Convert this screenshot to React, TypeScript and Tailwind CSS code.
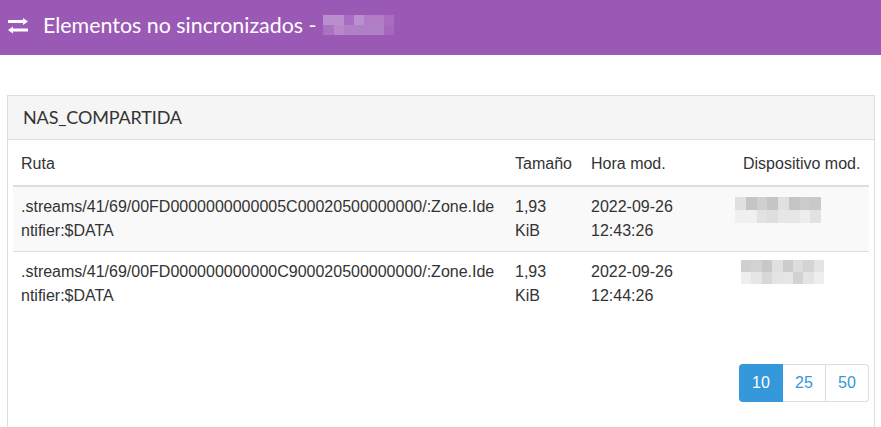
const headingFont = "font-['Lato','Open_Sans',sans-serif]";

const rows = [
  {
    path: ".streams/41/69/00FD0000000000005C00020500000000/:Zone.Identifier:$DATA",
    time: "12:43:26",
    rowClass: "h-[65px] border-b border-[#ddd] bg-[#f9f9f9]",
    mosaicClass: "w-[86px] pt-[10px]",
    cellClass: "h-[13px]",
    cells: [
      ["#e0e0e0", "#c5c5c5", "#d0d0d0", "#c5c5c5", "#e0e0e0", "#c5c5c5", "#cbcbcb", "#c9c9c9"],
      ["#f0f0f0", "#f0f0f0", "#e2e2e2", "#dedede", "#e6e6e6", "#e6e6e6", "#ededed", "#e2e2e2"],
    ],
  },
  {
    path: ".streams/41/69/00FD000000000000C900020500000000/:Zone.Identifier:$DATA",
    time: "12:44:26",
    rowClass: "h-[65px]",
    mosaicClass: "ml-[6px] w-[83px] pt-[8px]",
    cellClass: "h-[12px]",
    cells: [
      ["#d0d0d0", "#d3d3d3", "#c8c8c8", "#e0e0e0", "#cccccc", "#dddddd", "#d4d4d4", "#e4e4e4"],
      ["#eeeeee", "#e6e6e6", "#d8d8d8", "#e4e4e4", "#e6e6e6", "#d2d2d2", "#e4e4e4", "#eeeeee"],
    ],
  },
];

const titleCells = [
  ["#b98fcd", "#b98fcd", "#a96cc1", "#b98fcd", "#b07cc6", "#b07cc6", "#a96cc1"],
  ["#ab72c3", "#b888cb", "#b080c6", "#b080c6", "#b080c6", "#b080c6", "#a767bf"],
];

// pixelated block standing in for a censored name
function Mosaic({ cells, className, cellClass }: { cells: string[][]; className?: string; cellClass: string }) {
  return (
    <div className={className}>
      {cells.map((line, i) => (
        <div key={i} className="flex">
          {line.map((color, j) => (
            <div key={j} className={`flex-1 ${cellClass}`} style={{ backgroundColor: color }} />
          ))}
        </div>
      ))}
    </div>
  );
}

function App() {
  return (
    <div className="h-[427px] w-[881px] overflow-hidden bg-white font-['Liberation_Sans',sans-serif] text-[16px] leading-[24px] text-[#333]">
      <header className={`flex h-[55px] items-center bg-[#9b59b6] pb-[5px] pl-[8px] text-white ${headingFont}`}>
        <svg viewBox="0 0 20 16" className="mt-[1px] h-[16px] w-[20px] fill-white">
          <path d="M0 2h15V0l5 3.5-5 3.5V5H0z" />
          <path d="M20 10.5H5V8.5L0 12l5 3.5V13.5h15z" />
        </svg>
        <h1 className="mb-[1px] ml-[15px] text-[21.4px] font-normal">Elementos no sincronizados -</h1>
        <Mosaic cells={titleCells} className="ml-[7px] w-[71px]" cellClass="h-[10px]" />
      </header>

      <section className="ml-[7px] mr-[6px] mt-[40px] h-[360px] border border-[#ddd]">
        <div className={`h-[44px] border-b border-[#ddd] bg-[#f5f5f5] px-[15px] pt-[9px] text-[18px] tracking-[-0.15px] ${headingFont}`}>
          NAS_COMPARTIDA
        </div>
        <div className="px-[5px]">
          <table className="w-full table-fixed border-collapse">
            <thead>
              <tr className="h-[46px] border-b-2 border-[#ddd] text-left">
                <th className="w-[494px] px-[8px] pb-[9px] align-bottom font-normal">Ruta</th>
                <th className="w-[76px] px-[8px] pb-[9px] align-bottom font-normal">Tamaño</th>
                <th className="px-[8px] pb-[9px] align-bottom font-normal">Hora mod.</th>
                <th className="w-[134px] px-[8px] pb-[9px] align-bottom font-normal whitespace-nowrap">Dispositivo mod.</th>
              </tr>
            </thead>
            <tbody>
              {rows.map((row) => (
                <tr key={row.time} className={row.rowClass}>
                  <td className="px-[8px] align-middle break-all">{row.path}</td>
                  <td className="px-[8px] align-middle">1,93 KiB</td>
                  <td className="px-[8px] align-middle">2022-09-26 {row.time}</td>
                  <td className="align-top">
                    <Mosaic cells={row.cells} className={row.mosaicClass} cellClass={row.cellClass} />
                  </td>
                </tr>
              ))}
            </tbody>
          </table>
          <div className="mt-[48px] flex justify-end">
            <div className="flex h-[38px] text-[#3498db]">
              <span className="flex w-[44px] items-center justify-center rounded-l-[4px] bg-[#3498db] text-white">10</span>
              <span className="flex w-[43px] items-center justify-center border-y border-r border-[#ddd]">25</span>
              <span className="flex w-[43px] items-center justify-center rounded-r-[4px] border-y border-r border-[#ddd]">50</span>
            </div>
          </div>
        </div>
      </section>
    </div>
  );
}

export default App;
